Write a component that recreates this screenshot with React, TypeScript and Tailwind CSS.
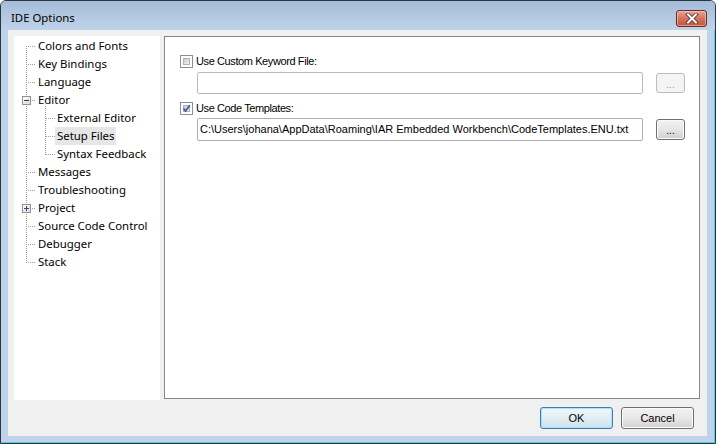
import React from "react";

const TREE_FONT = { fontFamily: '"Segoe UI", "Noto Sans", sans-serif' };
const SANS = { fontFamily: '"Liberation Sans", Arial, sans-serif' };

type Item = { label: string; level: number; selected?: boolean };
const items: Item[] = [
  { label: "Colors and Fonts", level: 1 },
  { label: "Key Bindings", level: 1 },
  { label: "Language", level: 1 },
  { label: "Editor", level: 1 },
  { label: "External Editor", level: 2 },
  { label: "Setup Files", level: 2, selected: true },
  { label: "Syntax Feedback", level: 2 },
  { label: "Messages", level: 1 },
  { label: "Troubleshooting", level: 1 },
  { label: "Project", level: 1 },
  { label: "Source Code Control", level: 1 },
  { label: "Debugger", level: 1 },
  { label: "Stack", level: 1 },
];

function dotsH(x1: number, x2: number, y: number) {
  const r: React.ReactElement[] = [];
  for (let x = x1; x <= x2; x += 2) r.push(<rect key={`h${x}-${y}`} x={x} y={y} width={1} height={1} />);
  return r;
}
function dotsV(x: number, y1: number, y2: number) {
  const r: React.ReactElement[] = [];
  for (let y = y1; y <= y2; y += 2) r.push(<rect key={`v${x}-${y}`} x={x} y={y} width={1} height={1} />);
  return r;
}

function TreeLines() {
  const c = (i: number) => 10 + 18 * i;
  const dots: React.ReactElement[] = [];
  dots.push(...dotsV(12, c(0), c(12)));
  items.forEach((it, i) => {
    if (it.level === 1) dots.push(...dotsH(14, 21, c(i)));
    else dots.push(...dotsH(32, 40, c(i)));
  });
  dots.push(...dotsV(31, c(3) + 6, c(6)));
  const box = (i: number, plus: boolean) => {
    const y = c(i) - 4;
    return (
      <g key={`box${i}`}>
        <rect x={8.5} y={y + 0.5} width={8} height={8} fill="url(#bx)" stroke="#919191" />
        <rect x={10} y={c(i)} width={5} height={1} fill={plus ? "#2f4c8a" : "#3a3a3a"} />
        {plus && <rect x={12} y={c(i) - 2} width={1} height={5} fill="#2f4c8a" />}
      </g>
    );
  };
  return (
    <svg className="absolute left-0 top-0 pointer-events-none" width={146} height={364} shapeRendering="crispEdges">
      <defs>
        <linearGradient id="bx" x1="0" y1="0" x2="1" y2="1">
          <stop offset="0" stopColor="#ffffff" />
          <stop offset="1" stopColor="#d8d8d8" />
        </linearGradient>
      </defs>
      <g fill="#a0a0a0">{dots}</g>
      {box(3, false)}
      {box(9, true)}
    </svg>
  );
}

function Checkbox({ checked }: { checked: boolean }) {
  return (
    <div className="w-[13px] h-[13px] border border-[#8e8f8f] bg-white p-[2px] shrink-0">
      <div className="w-full h-full border border-[#aeb3b9] bg-gradient-to-br from-[#c6cad0] to-[#f4f4f4] relative">
        {checked && (
          <svg className="absolute left-[-2px] top-[-2px]" width={9} height={9} viewBox="0 0 9 9">
            <path d="M1.5 4.5 L3.5 7 L7.8 1.2" fill="none" stroke="#4a5f97" strokeWidth={1.8} />
          </svg>
        )}
      </div>
    </div>
  );
}

function CloseButton() {
  return (
    <div className="w-[31px] h-[17px] rounded-[3px] border border-[#6b2a24] bg-gradient-to-b from-[#e7a796] via-[#d4735f] to-[#c5523a] shadow-[inset_0_0_0_1px_rgba(255,210,200,0.55)] flex items-center justify-center">
      <svg width={14} height={11} viewBox="0 0 14 11">
        <path d="M3 1.5 L11 9.5 M11 1.5 L3 9.5" stroke="#4b2a2a" strokeWidth={3.6} strokeLinecap="square" />
        <path d="M3 1.5 L11 9.5 M11 1.5 L3 9.5" stroke="#ffffff" strokeWidth={2} strokeLinecap="square" />
      </svg>
    </div>
  );
}

export default function App() {
  return (
    <div className="w-[716px] h-[444px] rounded-t-[6px] border border-[#2d3640] bg-[#bed4eb] flex flex-col overflow-hidden">
      {/* Title bar */}
      <div className="h-[29px] shrink-0 bg-gradient-to-b from-[#a4bcd8] to-[#bfd4ea] flex items-start pl-[10px] pr-[8px]">
        <div className="pt-[9px] text-[11.4px] leading-[16px] text-black" style={TREE_FONT}>
          IDE Options
        </div>
        <div className="ml-auto pt-[9px]">
          <CloseButton />
        </div>
      </div>
      {/* Frame body */}
      <div className="flex-1 flex flex-col px-[7px] pb-[6px] border-b border-[#56c6e9] border-r border-r-[#56c6e9]">
        <div className="flex-1 bg-[#f0f0f0] flex flex-col pt-[6px] pl-[6px]">
          <div className="flex items-start">
            {/* Tree */}
            <div className="w-[146px] h-[364px] bg-white relative pt-[1px] text-black text-[11.4px]" style={TREE_FONT}>
              <TreeLines />
              {items.map((it) => (
                <div
                  key={it.label}
                  className={`h-[18px] flex items-center relative ${it.level === 1 ? "pl-[22px]" : "pl-[41px]"}`}
                >
                  <span className={`px-[2px] h-[18px] leading-[18px] whitespace-nowrap ${it.selected ? "bg-[#e6e6e6]" : ""}`}>
                    {it.label}
                  </span>
                </div>
              ))}
            </div>
            {/* Panel */}
            <div className="ml-[4px] w-[536px] h-[363px] border border-[#828790] bg-white pl-[15px] pt-[18px] text-[11px] text-black" style={SANS}>
              <div className="flex items-center h-[13px]">
                <Checkbox checked={false} />
                <span className="ml-[3px] leading-[13px] tracking-[-0.4px]">Use Custom Keyword File:</span>
              </div>
              <div className="flex items-center mt-[4px] pl-[17px]">
                <div className="w-[446px] h-[22px] border border-[#b5b8bd] rounded-[2px] bg-white" />
                <div className="ml-[13px] w-[29px] h-[20px] border border-[#b9bdc0] rounded-[3px] bg-[#f4f4f4] flex items-center justify-center text-[#9a9a9a] text-[10px] leading-none pt-[3px]">
                  ...
                </div>
              </div>
              <div className="flex items-center h-[13px] mt-[8px]">
                <Checkbox checked={true} />
                <span className="ml-[3px] leading-[13px] tracking-[-0.4px]">Use Code Templates:</span>
              </div>
              <div className="flex items-center mt-[3px] pl-[17px]">
                <div className="w-[446px] h-[23px] border border-[#abadb3] rounded-[2px] bg-white flex items-center pl-[2px] whitespace-nowrap overflow-hidden">
                  C:\Users\johana\AppData\Roaming\IAR Embedded Workbench\CodeTemplates.ENU.txt
                </div>
                <div className="ml-[13px] w-[29px] h-[21px] border border-[#707070] rounded-[3px] bg-gradient-to-b from-[#f2f2f2] via-[#e6e6e6] to-[#d0d0d0] shadow-[inset_0_0_0_1px_#fcfcfc] flex items-center justify-center text-black text-[10px] leading-none pt-[3px]">
                  ...
                </div>
              </div>
            </div>
          </div>
          {/* Buttons */}
          <div className="flex justify-end gap-[8px] mt-[7px] pr-[13px]" style={SANS}>
            <div className="w-[73px] h-[22px] rounded-[3px] border border-[#3c7fb1] bg-gradient-to-b from-[#f0f7fb] via-[#e3eef5] to-[#cfe0ea] shadow-[inset_0_0_0_1px_#a6e4f9] flex items-center justify-center text-[11px] text-black">
              OK
            </div>
            <div className="w-[73px] h-[22px] rounded-[3px] border border-[#707070] bg-gradient-to-b from-[#f2f2f2] via-[#e8e8e8] to-[#d2d2d2] shadow-[inset_0_0_0_1px_#fbfbfb] flex items-center justify-center text-[11px] text-black">
              Cancel
            </div>
          </div>
        </div>
      </div>
    </div>
  );
}
